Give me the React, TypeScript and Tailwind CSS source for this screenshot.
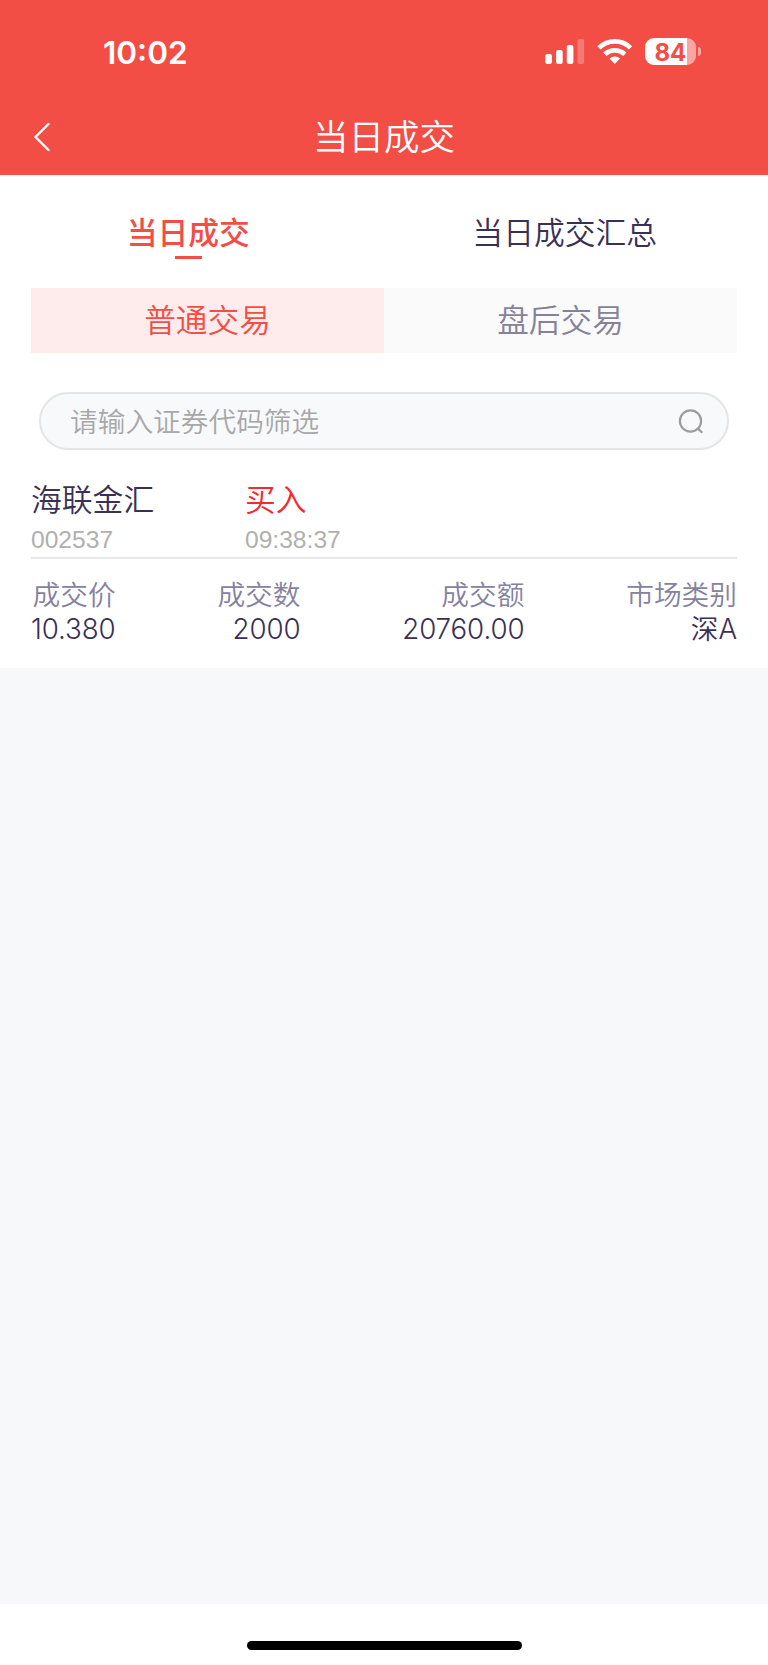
import clsx from "clsx";

const columns = [
  { label: "成交价", value: "10.380" },
  { label: "成交数", value: "2000" },
  { label: "成交额", value: "20760.00" },
  { label: "市场类别", value: "深A" },
];

function StatusBar() {
  return (
    <div className="flex h-[98px] items-start justify-between pt-[37px] pr-[67px] pl-[103px]">
      <span className="font-['Inter',sans-serif] text-[31.5px] leading-8 font-semibold">
        10:02
      </span>
      <div className="flex items-start">
        <svg className="mt-[2px]" width="40" height="26" viewBox="0 0 40 26" fill="currentColor">
          <rect x="0.3" y="15" width="6.6" height="10" rx="2" />
          <rect x="11.1" y="11" width="6.6" height="14" rx="2" />
          <rect x="21.8" y="6" width="6.6" height="19" rx="2" />
          <rect x="32.5" y="0" width="6.6" height="25" rx="2" opacity="0.25" />
        </svg>
        <svg className="mt-[2px] ml-[12px]" width="36" height="26" viewBox="0 0 36 26" fill="none" stroke="currentColor" strokeWidth="4.8">
          <path d="M2 8.9a22.6 22.6 0 0 1 31.6 0" />
          <path d="M7.8 15.3a14.5 14.5 0 0 1 20 0" />
          <path d="M17.8 25l-5.3-5.4a7.8 7.8 0 0 1 10.6 0z" fill="currentColor" stroke="none" />
        </svg>
        <div className="mt-[1px] ml-[12px] flex items-center">
          <div className="flex h-[27px] w-[51px] items-center overflow-hidden rounded-[9px] bg-linear-to-r from-white from-82% to-white/50 to-82%">
            <span className="pt-px pl-[9.5px] font-['Inter',sans-serif] text-[24px] leading-[27px] font-bold text-[#f24e46]">
              84
            </span>
          </div>
          <div className="ml-[2px] h-[9px] w-[3px] rounded-r-full bg-white/50" />
        </div>
      </div>
    </div>
  );
}

export default function App() {
  return (
    <div className="flex h-[1665px] w-[768px] flex-col bg-[#f7f8fa] font-['Noto_Sans_CJK_SC',sans-serif] font-[350] text-[#3a3056]">
      <header className="h-[175px] bg-[#f24e46] text-white">
        <StatusBar />
        <div className="grid h-[77px] grid-cols-[100px_1fr_100px] items-center">
          <svg className="ml-[33px]" width="17" height="30" viewBox="0 0 17 30" fill="none" stroke="currentColor" strokeWidth="2.4" strokeLinecap="round" strokeLinejoin="round">
            <path d="M15.5 2L2.5 15l13 13" />
          </svg>
          <h1 className="pb-[3px] text-center text-[35.5px] leading-[40px] font-[350]">当日成交</h1>
        </div>
      </header>

      <main className="h-[493px] bg-white">
        <nav className="flex h-[113px] pr-[15px] text-[30.8px] leading-[40px]">
          <div className="flex flex-1 flex-col items-center pt-[36px] font-medium text-[#f24e46]">
            当日成交
            <span className="mt-[5px] h-[3px] w-[27px] bg-[#f24e46]" />
          </div>
          <div className="flex-1 pt-[36px] text-center">当日成交汇总</div>
        </nav>

        <div className="mx-[31px] flex h-[65px] text-center text-[31.7px] leading-[61px]">
          <div className="flex-1 bg-[#feecec] text-[#f24e46]">普通交易</div>
          <div className="flex-1 bg-[#fafafa] text-[#858299]">盘后交易</div>
        </div>

        <div className="mx-[39px] mt-[39px] flex h-[58px] items-center justify-between rounded-full border-2 border-[#e4e5e7] bg-[#f8f9fb] pr-[23px] pl-[29px]">
          <span className="pb-[2px] text-[27.7px] leading-[40px] text-[#a8a8a8]">请输入证券代码筛选</span>
          <svg width="26" height="26" viewBox="0 0 26 26" fill="none" stroke="#9c9c9e" strokeWidth="2.2">
            <circle cx="12.5" cy="13" r="10.6" />
            <path d="M20 20.5l4.2 4.2" />
          </svg>
        </div>

        <section className="mx-[31px] mt-[28px]">
          <div className="flex border-b-2 border-[#e8e8ea]">
            {[
              { title: "海联金汇", sub: "002537", box: "w-[214px]", tone: "" },
              { title: "买入", sub: "09:38:37", box: "", tone: "text-[#f5292f]" },
            ].map((item) => (
              <div key={item.title} className={clsx("h-[79px]", item.box)}>
                <div className={clsx("text-[30.8px] leading-[40px]", item.tone)}>{item.title}</div>
                <div className="pt-[3px] font-['Liberation_Sans',sans-serif] text-[24.6px] leading-[38px] text-[#b0b0b0]">
                  {item.sub}
                </div>
              </div>
            ))}
          </div>
          <div className="flex justify-between pt-[17px]">
            {columns.map((col) => (
              <div key={col.label} className="text-right text-[27.7px] leading-[35px]">
                <div className="text-[#8582a0]">{col.label}</div>
                <div className="pt-px font-['Inter','Noto_Sans_CJK_SC',sans-serif] tracking-[-0.1px]">{col.value}</div>
              </div>
            ))}
          </div>
        </section>
      </main>

      <footer className="mt-auto flex h-[61px] justify-center bg-white pt-[37px]">
        <div className="h-[9px] w-[275px] rounded-full bg-black" />
      </footer>
    </div>
  );
}
